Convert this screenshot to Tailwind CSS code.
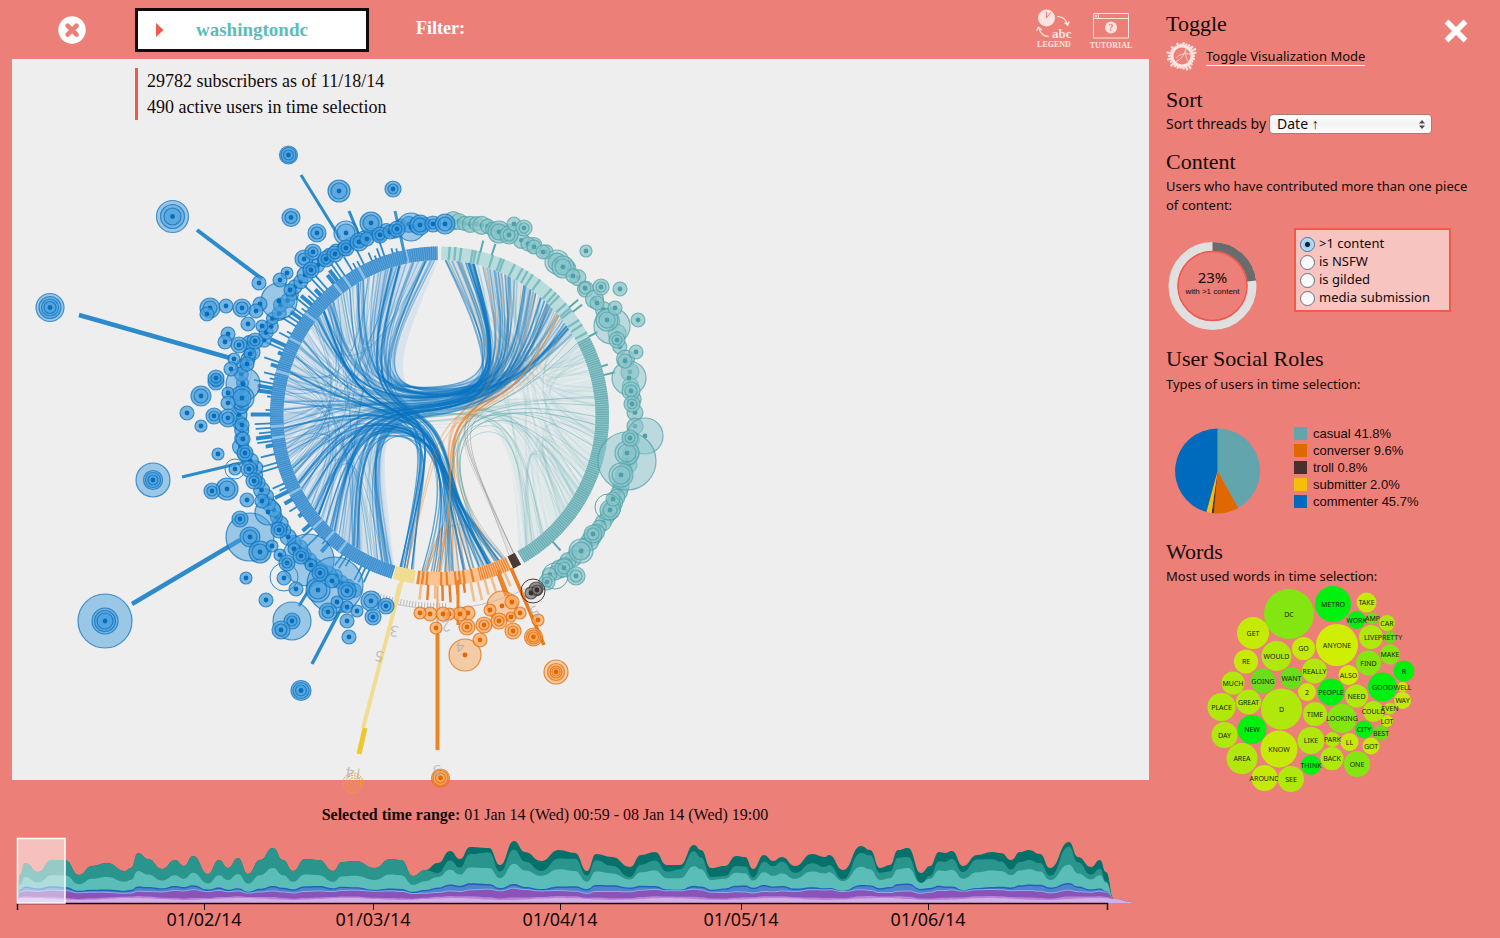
<!DOCTYPE html>
<html lang="en">
<head>
<meta charset="utf-8">
<meta name="viewport" content="width=device-width, initial-scale=1">
<title>washingtondc – subreddit activity</title>
<script src="https://cdn.jsdelivr.net/npm/@tailwindcss/browser@4"></script>
</head>
<body class="bg-[#ec8078] text-[#150808] font-['Noto_Sans',sans-serif] text-[13px]">
<div class="grid grid-cols-[minmax(0,1fr)_351px] min-h-screen">
  <main class="flex flex-col pl-3">
    <header class="flex h-[59px] pt-2 pr-[18px]">
      <button type="button" aria-label="Remove subreddit" class="ml-[46px] mt-2 size-7">
        <svg viewBox="0 0 28 28" class="size-7"><circle cx="14" cy="14" r="13.7" fill="#fff"/><path d="M9.600 9.600l9 9M18.600 9.600l-9 9" stroke="#ec8078" stroke-width="4.600" stroke-linecap="round"/></svg>
      </button>
      <button type="button" class="ml-[49px] flex h-11 w-[234px] items-center border-[3px] border-[#120a0a] bg-white pl-[18px] font-['Liberation_Serif',serif] text-[19px] font-bold text-[#5bbdb8]">
        <svg viewBox="0 0 8 14" class="h-3.5 w-2"><path d="M0 0L7.500 7L0 14z" fill="#ee5a4c"/></svg>
        <span class="ml-8">washingtondc</span>
      </button>
      <span class="ml-[47px] mt-1.5 font-['Liberation_Serif',serif] text-lg leading-7 font-bold text-white">Filter:</span>
      <button type="button" class="ml-auto flex w-[34px] flex-col items-center font-['Liberation_Serif',serif] text-[8px] leading-[8px] font-bold text-[#fbe3e0]">
        <svg viewBox="0 0 34 32" class="h-8 w-[34px] overflow-visible" fill="none" stroke="#fbe3e0"><circle cx="9.500" cy="10" r="8.500" fill="#fbe3e0" stroke="none"/><path d="M9.500 10V3.500M9.500 10L13.500 4.500" stroke="#ec8078"/><path d="M20 8.500c5 0 9 3 10.500 8M27.500 14.500l3.200 3 1.500-4.300M12 28.500c-5 0-8.500-3-10-8M-.5 23l1.900-3.800 3.500 2.800" stroke-width="1.200"/><text x="15" y="30" font-size="13" font-weight="bold" fill="#fbe3e0" stroke="none">abc</text></svg>
        <span class="mt-px">LEGEND</span>
      </button>
      <button type="button" class="ml-5 flex w-10 flex-col items-center font-['Liberation_Serif',serif] text-[8px] leading-[8px] font-bold text-[#fbe3e0]">
        <svg viewBox="0 0 40 32" class="h-8 w-10 overflow-visible" fill="none" stroke="#fbe3e0"><path d="M2.500 5.500h35v24.500h-35zM2.500 10.500h35M7.500 5.500v5M3.800 6.800l2.500 2.500M6.300 6.800l-2.500 2.500"/><circle cx="20" cy="19.500" r="6" fill="#fbe3e0" stroke="none"/><text x="20" y="23" font-size="10" font-weight="bold" text-anchor="middle" fill="#ec8078" stroke="none">?</text></svg>
        <span class="mt-0.5">TUTORIAL</span>
      </button>
    </header>

    <section class="relative h-[721px] bg-[#eee] pt-[9px] pl-[123px]">
      <div class="w-80 border-l-[3px] border-[#ef5a4c] pl-[9px] font-['Liberation_Serif',serif] text-[18px] leading-[26px]">
        <p>29782 subscribers as of 11/18/14</p>
        <p>490 active users in time selection</p>
      </div>
      <svg id="chord" viewBox="12 59 1137 721" class="pointer-events-none absolute top-0 left-0 h-[721px] w-[1137px] overflow-visible" role="img" aria-label="User interactions" fill="none"></svg>
    </section>

    <footer class="pt-6">
      <p class="pr-[71px] text-center font-['Liberation_Serif',serif] text-base leading-[22px]"><b>Selected time range:</b> 01 Jan 14 (Wed) 00:59 - 08 Jan 14 (Wed) 19:00</p>
      <svg id="stream" viewBox="12 826 1137 112" class="h-28 w-full" preserveAspectRatio="xMinYMin meet" role="img" aria-label="Activity over time" font-size="18"></svg>
    </footer>
  </main>

  <aside class="pt-2.5 pl-[17px]">
    <div class="flex h-7 justify-between pr-8">
      <h2 class="font-['Liberation_Serif',serif] text-[22px] leading-7">Toggle</h2>
      <button type="button" aria-label="Close" class="mt-[9px] size-6"><svg viewBox="0 0 24 24" class="size-6 overflow-visible"><path d="M2.500 2.500l19 19M21.500 2.500l-19 19" stroke="#fff" stroke-width="5.500"/></svg></button>
    </div>
    <div class="flex h-9 items-center gap-2">
      <svg id="burst" viewBox="0 0 32 32" class="size-8 overflow-visible" fill="none" stroke="#fbe3e0"></svg>
      <a href="#" class="border-b border-white leading-[18px]">Toggle Visualization Mode</a>
    </div>

    <h2 class="mt-3 font-['Liberation_Serif',serif] text-[22px] leading-7">Sort</h2>
    <div class="flex items-center gap-[3px] text-sm">
      <label for="sort">Sort threads by</label>
      <span class="relative">
        <select id="sort" class="block h-5 w-[163px] appearance-none rounded border border-[#b07a76] bg-linear-to-b from-white via-[#f3f3f3] to-white pl-[7px] leading-[18px]"><option>Date ↑</option></select>
        <svg viewBox="0 0 6 9" class="pointer-events-none absolute top-1.5 right-[7px] h-[9px] w-1.5" fill="#554848"><path d="M0 3.500L3 0L6 3.500zM0 5.500L3 9L6 5.500z"/></svg>
      </span>
    </div>

    <h2 class="mt-3.5 font-['Liberation_Serif',serif] text-[22px] leading-7">Content</h2>
    <p class="mt-px w-[312px] leading-[19px]">Users who have contributed more than one piece of content:</p>
    <div class="mt-[13px] flex gap-[37px]">
      <svg viewBox="0 0 91 104" class="h-[104px] w-[91px]" text-anchor="middle">
        <g fill="none"><circle cx="46.500" cy="58" r="39.500" stroke="#e0e0e0" stroke-width="9"/><path d="M46.500 18.500A39.500 39.500 0 0 1 85.700 53" stroke="#6b6b6b" stroke-width="9"/><circle cx="46.500" cy="58" r="34.500" stroke="#ef5a4c" stroke-width="1.500"/></g>
        <text x="46.500" y="55" font-size="15" fill="#150808">23%</text>
        <text x="46.500" y="66" font-size="8" font-family="Liberation Sans" fill="#150808">with &gt;1 content</text>
      </svg>
      <div role="radiogroup" aria-label="Content filter" class="h-[84px] w-[157px] border-2 border-[#ef5a4c] bg-[#f7c4bf] pt-[5px] pl-1">
        <div class="flex h-[18px] items-center gap-1"><input id="r1" name="c" type="radio" checked class="size-[15px] appearance-none rounded-full border border-[#4a6d94] bg-[radial-gradient(circle,#0c1e33_2px,#9accf0_3px,#c6e6fa_7px)]"><label for="r1">&gt;1 content</label></div>
        <div class="flex h-[18px] items-center gap-1"><input id="r2" name="c" type="radio" class="size-[15px] appearance-none rounded-full border border-gray-500 bg-linear-to-b from-gray-100 to-white"><label for="r2">is NSFW</label></div>
        <div class="flex h-[18px] items-center gap-1"><input id="r3" name="c" type="radio" class="size-[15px] appearance-none rounded-full border border-gray-500 bg-linear-to-b from-gray-100 to-white"><label for="r3">is gilded</label></div>
        <div class="flex h-[18px] items-center gap-1"><input id="r4" name="c" type="radio" class="size-[15px] appearance-none rounded-full border border-gray-500 bg-linear-to-b from-gray-100 to-white"><label for="r4">media submission</label></div>
      </div>
    </div>

    <h2 class="mt-[13px] font-['Liberation_Serif',serif] text-[22px] leading-7">User Social Roles</h2>
    <p class="mt-px leading-[21px]">Types of users in time selection:</p>
    <div class="mt-8 flex gap-[34px]">
      <svg id="pie" viewBox="0 0 94 88" class="h-[88px] w-[94px]"></svg>
      <ul class="-mt-0.5 font-['Liberation_Sans',sans-serif] text-[13px] leading-[17px]">
        <li class="flex items-center gap-1.5"><i class="size-[13px] bg-[#62a5ad]"></i>casual 41.8%</li>
        <li class="flex items-center gap-1.5"><i class="size-[13px] bg-[#e06800]"></i>converser 9.6%</li>
        <li class="flex items-center gap-1.5"><i class="size-[13px] bg-[#4a302c]"></i>troll 0.8%</li>
        <li class="flex items-center gap-1.5"><i class="size-[13px] bg-[#f5be0a]"></i>submitter 2.0%</li>
        <li class="flex items-center gap-1.5"><i class="size-[13px] bg-[#006bbd]"></i>commenter 45.7%</li>
      </ul>
    </div>

    <h2 class="mt-[23px] font-['Liberation_Serif',serif] text-[22px] leading-7">Words</h2>
    <p class="leading-[21px]">Most used words in time selection:</p>
    <svg id="words" viewBox="1166 587 260 210" class="h-[210px] w-[260px] overflow-visible" font-size="7" text-anchor="middle"></svg>
  </aside>
</div>

<script>
const $ = id => document.getElementById(id);
let seed = 7;
const rnd = () => (seed = (seed * 16807) % 2147483647) / 2147483647;
const CX = 439.5, CY = 416;
const at = (deg, r) => [CX + r * Math.sin(deg * Math.PI / 180), CY - r * Math.cos(deg * Math.PI / 180)];
const f = n => n.toFixed(1);
const pt = (deg, r) => at(deg, r).map(f).join(' ');
const arc = (a, b, r) => `M${pt(a, r)}A${r} ${r} 0 ${b - a > 180 ? 1 : 0} 1 ${pt(b, r)}`;
const BLUE = '#0a74c2', TEAL = '#5ba8ae', ORANGE = '#ec7410', DARK = '#4a3a38';
let out = '';

/* B-spline through bundled control points */
function bundle(pts, t) {
  const n = pts.length - 1, s = pts[0], e = pts[n];
  const p = pts.map((q, i) => [t * q[0] + (1 - t) * (s[0] + (e[0] - s[0]) * i / n), t * q[1] + (1 - t) * (s[1] + (e[1] - s[1]) * i / n)]);
  const w = [p[0], p[0], ...p, p[n], p[n]];
  let d = `M${f(s[0])} ${f(s[1])}`;
  for (let i = 1; i < w.length - 2; i++) {
    const [a, b, c] = [w[i], w[i + 1], w[i + 2]];
    d += `C${f((2 * a[0] + b[0]) / 3)} ${f((2 * a[1] + b[1]) / 3)} ${f((a[0] + 2 * b[0]) / 3)} ${f((a[1] + 2 * b[1]) / 3)} ${f((a[0] + 4 * b[0] + c[0]) / 6)} ${f((a[1] + 4 * b[1] + c[1]) / 6)}`;
  }
  return d;
}
const hub = { b: [278, 84], t: [75, 80], o: [171, 78], y: [192, 78], d: [152, 78] };
const range = { b: [198, 359], t: [2, 60], T: [62, 149], o: [155, 187], y: [189, 195], d: [151.5, 153.5] };
function chords(from, to, count, color, op, width, t = 0.9) {
  const hubOf = k => at(...hub[k.toLowerCase()]);
  for (let i = 0; i < count; i++) {
    const a = range[from][0] + rnd() * (range[from][1] - range[from][0]);
    const b = range[to][0] + rnd() * (range[to][1] - range[to][0]);
    const same = from.toLowerCase() === to.toLowerCase();
    const mid = same ? [hubOf(from)] : [hubOf(from), [CX + rnd() * 5 - 2, CY - 6 + rnd() * 8], hubOf(to)];
    out += `<path d="${bundle([at(a, 156), ...mid, at(b, 156)], t - rnd() * .06)}" stroke="${color}" stroke-opacity="${(op * (.5 + rnd())).toFixed(3)}" stroke-width="${width}"/>`;
  }
}
/* pale washes behind the chords */
out += `<path d="M${pt(197, 156)}A156 156 0 0 1 ${pt(359.5, 156)}C410 330 385 380 420 395L440 412L405 425C375 430 385 480 ${pt(197, 156)}Z" fill="#a5cbea" fill-opacity=".3"/>`;
out += `<path d="M${pt(60, 156)}A156 156 0 0 1 ${pt(149.5, 156)}C515 490 515 440 480 415C500 400 520 385 ${pt(60, 156)}Z" fill="#b5dadd" fill-opacity=".3"/>`;
out += `<path d="M${pt(2, 156)}A156 156 0 0 1 ${pt(60, 156)}C520 385 500 395 478 394C498 380 490 345 ${pt(2, 156)}Z" fill="#b5dadd" fill-opacity=".25"/>`;
chords('b', 't', 34, BLUE, .06, 4);
chords('b', 'b', 40, BLUE, .07, 3, .85);
chords('b', 'b', 12, '#eeeeee', .5, 2, .85);
chords('b', 't', 12, '#eeeeee', .4, 2);
chords('T', 't', 24, '#eeeeee', .5, 2, .8);
chords('T', 'b', 18, '#eeeeee', .5, 2);
chords('b', 'T', 10, TEAL, .22, 1.2);
chords('T', 't', 22, TEAL, .12, 1.5, .85);
chords('T', 'T', 20, TEAL, .1, 2, .85);
chords('T', 'b', 10, TEAL, .22, 1);
chords('t', 't', 4, TEAL, .2, 1, .8);
chords('b', 'b', 44, BLUE, .26, 1, .82);
chords('b', 'o', 10, TEAL, .4, 1);
chords('o', 't', 12, ORANGE, .25, 1.2);
chords('o', 'T', 9, TEAL, .4, 1);
chords('o', 'o', 10, ORANGE, .22, 1.2);
chords('d', 't', 4, '#777777', .4, 1);
chords('b', 'o', 34, BLUE, .42, 1.3);
chords('b', 'y', 11, BLUE, .5, 1.4);
chords('b', 't', 70, BLUE, .3, 1.4);
chords('b', 't', 12, BLUE, .65, 2);
chords('b', 'o', 5, BLUE, .7, 2);
chords('y', 't', 2, ORANGE, .35, 1.2);
out += `<path d="${bundle([at(180, 156), at(171, 78), [CX, CY], at(75, 80), at(50, 156)], .9)}" stroke="#f08a35" stroke-width="1.5" stroke-opacity=".7"/>`;

/* ring */
const ring = (a, b, color, w = 13.5, r = 162.8, dash = '') => `<path d="${arc(a, b, r)}" stroke="${color}" stroke-width="${w}" ${dash ? `stroke-dasharray="${dash}"` : ''}/>`;
out += ring(196.5, 359.3, '#6aaade') + ring(196.5, 359.3, '#3f90cf', 13.5, 162.8, '1.5 .6');
[216, 222, 228, 242, 262, 266, 285, 297, 307, 321, 325, 331, 348].forEach(a => out += ring(a, a + .9, '#8cc0e6'));
out += ring(.6, 62, '#b9dcdd') + ring(62, 150, '#96c9cc') + ring(62, 150, '#6cb0b6', 13.5, 162.8, '1.5 .7');
[3, 5, 7, 11, 12, 13.5, 18, 21, 22, 26, 29, 31, 33, 36, 41, 43, 44.5, 48, 50, 51, 55, 57, 60].forEach(a => out += ring(a, a + .8, '#7bbcc1'));
out += ring(188.7, 196, '#f1dd92') + ring(154.8, 188, '#fac391') + ring(151.2, 154.2, DARK);
out += ring(155, 166, '#ee8a38', 13.5, 162.8, '1.5 .8');
[168, 171, 172.5, 174, 177, 179, 184, 185.5, 187].forEach(a => out += ring(a, a + .8, '#ee8228'));

/* radial bars */
const ray = (a, len, color, w = 2) => `<path d="M${pt(a, 169)}L${pt(a, 169 + len)}" stroke="${color}" stroke-width="${w}"/>`;
for (let a = 203; a < 346; a += 1.5) if (rnd() > .35) out += ray(a, 4 + rnd() * 17, '#2e8bcb', rnd() > .75 ? 4 : 1.8);
[[14, 12], [18, 12], [50, 12], [52, 12], [62, 10], [73, 7], [76, 12], [138, 12]].forEach(([a, l]) => out += ray(a, l, TEAL));
for (let a = 155; a < 188; a += 2.4) out += ray(a, 9 + rnd() * 14, rnd() > .4 ? '#ea7d28' : '#f6bc86', 2.5);
out += `<path d="${arc(178, 200, 190)}" stroke="#bbb" stroke-width="6" stroke-dasharray="1 2"/><path d="${arc(30, 360, 193)}" stroke="#c9c3be" stroke-width="1"/>`;
[[301,175,340,238,3,'#2e8bcb'],[349,211,361,240,3,'#2e8bcb'],[395,211,406,261,3,'#3f94d0'],[197,230,262,279,4,'#2e8bcb'],[79,315,230,358,4.5,'#2e8bcb'],[182,477,245,462,3,'#2e8bcb'],[132,604,240,540,4.5,'#2e8bcb'],[312,664,344,603,3.5,'#2e8bcb'],[299,606,318,575,3,'#2e8bcb'],
[404,572,363,728,4,'#f1dd92'],[399,584,394,610,3,'#f1dd92'],[365,728,359,754,5,'#eec72f'],[437.5,586,437.5,640,2,'#f2a868'],[437.5,634,437.5,750,4,'#ec8426'],[511,568,544,645,3.5,'#ea7d20'],[458,580,458,625,3,'#ec8426'],[498,570,512,605,3,'#ec8426']
].forEach(([a, b, c, d, w, s]) => out += `<path d="M${a} ${b}L${c} ${d}" stroke="${s}" stroke-width="${w}"/>`);

/* user bubbles */
function bubble(x, y, r, c, rings) {
  out += `<circle cx="${x}" cy="${y}" r="${r}" fill="${c.f}" fill-opacity="${r > 11 ? .5 : .72}" stroke="${c.s}" stroke-opacity=".7" stroke-width="1.2"/>`;
  (rings || (r > 7 && r < 13 ? [r - 3] : [])).forEach(q => out += `<circle cx="${x}" cy="${y}" r="${q}" fill="${c.f}" fill-opacity=".5" stroke="${c.s}" stroke-opacity=".7" stroke-width="1.2"/>`);
  out += `<circle cx="${x}" cy="${y}" r="2.4" fill="${c.s}"/>`;
}
const cb = { f: '#479fdd', s: '#0a6dbb' }, ct = { f: '#8ac6cb', s: '#4f9fa7' }, co = { f: '#fba75e', s: '#e06800' }, cd = { f: '#777', s: '#3a2c2a' };
for (let a = 206; a < 356; a += 2.3) { const p = at(a, 190 + rnd() * 6 + (a > 258 && a < 292 ? 8 : 0)); bubble(f(p[0]), f(p[1]), 6 + Math.round(rnd() * 2), cb, []); }
for (let a = 4; a < 146; a += (a < 20 || a > 98 ? 1.7 : 4)) { const p = at(a, 193 + rnd() * 3); bubble(f(p[0]), f(p[1]), 7 + Math.round(rnd() * 2), ct, []); }
[[279,301,18],[243,384,17],[308,560,26],[335,585,28],[250,537,24],[268,512,13],[292,621,19],[346,233,12],[411,227,14],[242,398,12],[318,590,12],
[291,217.5,9],[259,283,7],[287,273,6],[280,280,7],[290,290,6],[210,308,10],[207,314,7],[226,306,7],[242,308,9],[260,304,7],[256,311,7],[248,324,7],[262,326,6],[228,334,7],[225,342,7],[239,345,8],[255,341,8],[234,359,6],[250,354,6],[231,369,7],[247,364,7],[216,382,8],[216,378,8],[228,393,6],[228,403,7],[201,396,10],[187,413,7],[201,426,6],[214,416,8],[228,418,9],[242,425,7],
[339,191,11],[393,189,8],[317,233,9],[371,223,11],[304,259,9],[313,252,8],[311,270,8],[326,259,8],[335,254,8],[346,248,8],[359,242,9],[367,239,7],[380,235,8],[390,232,7],[397,229,8],[420,225,10],[433,224,8],[445,224,10],
[227,489,11],[212,491,8],[247,500,7],[240,519,8],[250,537,10],[260,552,11],[272,546,6],[279,530,8],[280,555,6],[287,563,8],[294,549,6],[301,556,8],[311,565,6],[284,578,7],[296,589,7],[320,573,8],[332,581,7],[347,591,9],[337,602,6],[347,607,6],[328,612,9],[347,621,7],[349,637,7],[357,611,6],[371,601,10],[386,606,8],[373,617,8],[292,621,8],[281,630,9],[246,578,6],[266,600,7],[218,454,6],[235,469,6],[243,439,7],[245,453,8],[249,469,8],[254,481,8],[262,501,7]
].forEach(([x, y, r]) => bubble(x, y, r, cb));
bubble(288.5, 155, 9, cb, [7.5, 5]); bubble(172.5, 216.5, 16, cb, [12, 8.5]); bubble(50, 307.5, 14, cb, [11, 8.5, 6]);
bubble(105, 621, 27, cb, [13, 10.5, 8]); bubble(153, 480, 17, cb, [9.5, 7.5, 5]); bubble(301, 690.5, 10, cb, [8, 5.5]);
[[235,469,10],[284,577,14]].forEach(([x, y, r]) => out += `<circle cx="${x}" cy="${y}" r="${r}" stroke="#2e8bcb"/>`);
[[557,262,12],[563,267,11],[612,326,18],[607,320,11],[629,378,17],[645,436,18],[627,461,29],[627,453,12],[621,475,12],[581,551,12],[610,510,10],[499,232,11],[509,235,9],[514,224,7],[524,228,8],[586,251,6],[528,244,7],[534,247,7],[543,252,7],[573,276,7],[585,288,6],[601,287,8],[620,289,7],[597,303,7],[615,308,7],[638,320,7],[617,340,8],[636,352,7],[625,361,7],[631,391,9],[632,404,8],[630,438,8],[613,499,7],[593,534,9],[564,568,9],[547,582,8],[576,576,9]
].forEach(([x, y, r]) => bubble(x, y, r, ct));
[[555,576,13],[608,507,13]].forEach(([x, y, r]) => out += `<circle cx="${x}" cy="${y}" r="${r}" stroke="${TEAL}"/>`);
[[465,655,16],[502,606,15],[480,640,7],[513,631,8],[538,620,6],[520,613,6],[511,617,5],[512,602,7],[499,621,8],[484,625,8],[467,627,8],[490,610,6],[468,613,7],[460,614,7],[449,614,6],[430,614,7],[420,613,6],[443,614,7],[436,628,6]
].forEach(([x, y, r]) => bubble(x, y, r, co));
bubble(556, 672, 12, co, [8.5, 6, 4]); bubble(533.5, 637, 9, co, [7, 5]); bubble(440.5, 778, 9, co, [7.5, 5]);
bubble(536, 589, 7, cd); bubble(531, 593, 6, cd); bubble(537, 590, 5, cd); out += `<circle cx="533" cy="591" r="12" stroke="#4a3a38"/>`;
[10, 7.5, 5, 2.5].forEach(r => out += `<circle cx="353" cy="783" r="${r}" stroke="#f0a030" stroke-dasharray="2 1"/>`);
[[394,632,'3',190],[379,657,'5',195],[354,774,'14',190],[437,771,'5',180],[460,648,'4',180],[446,627,'2',170],[535,612,'5',150]].forEach(([x, y, t, r]) => out += `<text transform="translate(${x} ${y}) rotate(${r})" font-size="15" fill="#aaa" fill-opacity=".7" text-anchor="middle" dominant-baseline="central">${t}</text>`);
$('chord').innerHTML = out;

/* stream graph */
const top1 = [[17,900],[20,875],[25,863],[38,872],[52,860],[65,860],[79,875],[92,866],[107,863],[125,871],[131,868],[138,853],[148,859],[162,869],[175,860],[184,866],[193,856],[208,874],[219,860],[228,868],[238,858],[248,874],[260,860],[273,848],[283,860],[293,871],[305,859],[319,860],[333,871],[342,862],[355,861],[375,868],[390,859],[401,860],[413,876],[425,870],[438,863],[450,851],[460,859],[470,847],[489,848],[500,865],[514,841],[525,852],[541,861],[559,850],[575,853],[587,871],[596,854],[612,857],[630,867],[641,855],[655,852],[667,865],[680,865],[694,845],[701,850],[711,868],[725,866],[736,856],[745,857],[753,869],[764,855],[773,861],[782,857],[795,866],[812,854],[825,857],[829,855],[843,870],[861,846],[870,850],[880,868],[890,865],[898,850],[908,848],[921,873],[930,866],[939,852],[945,853],[952,851],[963,866],[977,855],[992,852],[1001,853],[1011,860],[1020,852],[1029,850],[1040,854],[1050,868],[1069,842],[1078,857],[1091,867],[1100,860],[1106,872],[1114,899],[1131,902]];
const B = 903;
function area(pts, color) {
  let d = `M17 ${B}L${pts[0][0]} ${f(pts[0][1])}`;
  for (let i = 1; i < pts.length; i++) { const p = pts[i - 1], q = pts[i], m = (p[0] + q[0]) / 2; d += `C${f(m)} ${f(p[1])} ${f(m)} ${f(q[1])} ${q[0]} ${f(q[1])}`; }
  return `<path d="${d}L1131 ${B}Z" fill="${color}"/>`;
}
const layer = fn => top1.map(([x, y]) => { const h = B - y; return [x, B - Math.max(0, Math.min(h, fn(h, x)))]; });
const wob = (x, k, a) => a * Math.sin(x / k);
let s = area(top1, '#06706b');
s += area(layer((h, x) => x < 436 || x > 1110 ? h : h - 4 - Math.abs(wob(x, 31, 6))), '#2a958d');
s += area(layer((h, x) => h * .6 + 2), '#5bbdb7');
s += area(layer((h, x) => h * .2 + 7 + wob(x, 23, 1.5)), '#2461bf');
s += area(layer((h, x) => h * .19 + 6 + wob(x, 23, 1.5)), '#5083cc');
s += area(layer((h, x) => h * .1 + 8 + wob(x, 25, 1)), '#86aee2');
s += area(layer((h, x) => h * .1 + 7 + wob(x, 25, 1)), '#8b52b7');
s += area(layer((h, x) => h * .04 + 4 + wob(x, 17, 1)), '#b783d2');
s += area(layer((h, x) => 4 + wob(x, 17, 1)), '#d3b0ea');
s += `<path d="M17.5 910V903.5H1107.5V910" fill="none" stroke="#1a0c0c" stroke-width="1.5"/>`;
[[204, '01/02/14'], [373, '01/03/14'], [560, '01/04/14'], [741, '01/05/14'], [928, '01/06/14']].forEach(([x, t]) => s += `<path d="M${x + .5} 903V910" stroke="#1a0c0c"/><text x="${x}" y="926" text-anchor="middle" fill="#150808">${t}</text>`);
s += `<rect x="17.5" y="838.5" width="47.5" height="64.5" fill="#fff" fill-opacity=".5" stroke="#fff" stroke-width="1.5"/>`;
$('stream').innerHTML = s;

/* pie */
let acc = 0, pie = '';
[[41.8, '#62a5ad'], [9.6, '#e06800'], [.8, '#4a302c'], [2, '#f5be0a'], [45.8, '#006bbd']].forEach(([v, c]) => {
  const p = a => `${f(51.5 + 42.5 * Math.sin(a * Math.PI / 50))} ${f(44 - 42.5 * Math.cos(a * Math.PI / 50))}`;
  pie += `<path d="M51.5 44L${p(acc)}A42.5 42.5 0 0 1 ${p(acc + v)}Z" fill="${c}"/>`; acc += v;
});
$('pie').innerHTML = pie;

/* radial burst icon */
let bu = '<circle cx="16" cy="16" r="10" stroke-width="3"/><path d="M8 22c6-1 10-6 12-14M10 18c4-4 9-5 14-4M20 8c-1 7 0 11 3 14" stroke-width=".8"/>';
for (let i = 0; i < 26; i++) { const a = i * 2 * Math.PI / 26, r = 12 + rnd() * 4; bu += `<path d="M${f(16 + 10 * Math.cos(a))} ${f(16 + 10 * Math.sin(a))}L${f(16 + r * Math.cos(a))} ${f(16 + r * Math.sin(a))}" stroke-width="2.2"/>`; }
$('burst').innerHTML = bu;

/* word bubbles: x, y, radius, label, fill */
const Y = '#c6ea08', L = '#b0e80c', G = '#84e610', H = '#6ade1a', V = '#00f010';
$('words').innerHTML = [[1289,614,25,'DC',G],[1333,604,18,'METRO',V],[1366.5,602.5,10,'TAKE',Y],[1356.5,620,9,'WORK',V],[1372.5,618.5,6,'AMP',H],[1387,623,8,'CAR',L],[1253,633,16,'GET',Y],[1337,645,21,'ANYONE','#d0ee04'],[1371,637,12,'LIVE',L],[1390,637.5,6,'PRETTY',H],[1303.5,648.5,11.5,'GO',Y],[1276.5,656,15,'WOULD',L],[1246,661.5,12,'RE',Y],[1390,654.5,10,'MAKE',G],[1368.5,663,12.5,'FIND',G],[1404,671,10.5,'R',V],[1314.5,671,12.5,'REALLY',L],[1348.5,675,10,'ALSO','#d0ee04'],[1263,681,12.5,'GOING',H],[1291.5,678,11,'WANT',H],[1233,683,11.5,'MUCH',L],[1307,692,9,'2',Y],[1331,692,13.5,'PEOPLE',V],[1382.5,687,14.5,'GOOD',V],[1402.5,687,5,'WELL',Y],[1356.5,696,11.5,'NEED',L],[1402.5,700.5,8.5,'WAY',Y],[1221.5,707,14,'PLACE',L],[1248.5,702,12.5,'GREAT',L],[1281.5,709,20.5,'D',L],[1315,714,12,'TIME',L],[1342,718.5,14.5,'LOOKING',G],[1373.5,711.5,10.5,'COULD',L],[1390,708.5,6,'EVEN',L],[1387,721,6,'LOT',Y],[1224.5,735,13,'DAY',L],[1252,729.5,14.5,'NEW',V],[1364,729.5,9,'CITY',V],[1381,733,7.5,'BEST',H],[1279,749,18.5,'KNOW',Y],[1311,740.5,13.5,'LIKE',L],[1332.5,739.5,7.5,'PARK',L],[1349.5,742,9,'LL',Y],[1371,746,8.5,'GOT',Y],[1242,758.5,15.5,'AREA',L],[1332,758.5,11.5,'BACK',L],[1311,765,10,'THINK',V],[1357,764,13,'ONE',G],[1264.5,778,13,'AROUND',Y],[1291,779,13,'SEE',L]]
  .map(([x, y, r, t, c]) => `<circle cx="${x}" cy="${y}" r="${r}" fill="${c}"/><text x="${x}" y="${y + 2.5}" fill="#1a2405">${t}</text>`).join('');
</script>
</body>
</html>
